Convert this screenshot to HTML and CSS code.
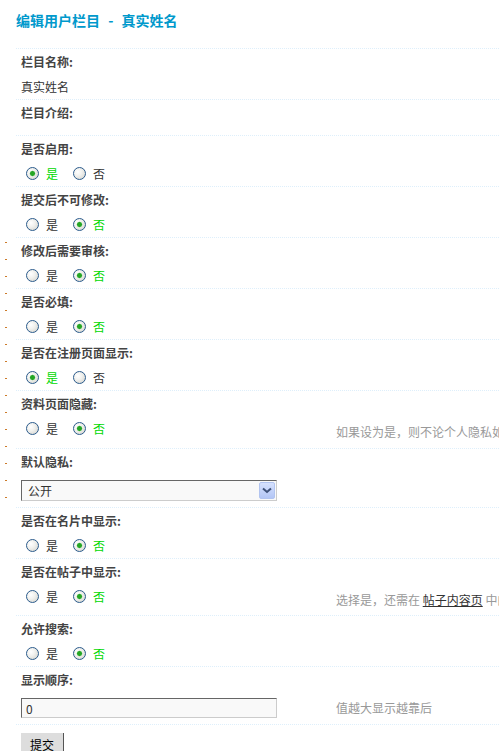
FILE: index.html
```html
<!DOCTYPE html>
<html lang="zh-CN">
<head>
    <meta charset="UTF-8">
    <title>编辑用户栏目</title>
    <link rel="stylesheet" href="styles.css">
</head>
<body>
    <div class="side-marks"></div>

    <h3 class="page-title">编辑用户栏目 - 真实姓名</h3>

    <form class="profile-form" id="profileForm">
        <div class="field">
            <div class="field-label">栏目名称:</div>
            <div class="field-value">
                <div class="cell">真实姓名</div>
            </div>
        </div>

        <div class="field">
            <div class="field-label">栏目介绍:</div>
            <div class="field-value empty"></div>
        </div>

        <div class="field">
            <div class="field-label">是否启用:</div>
            <div class="field-value">
                <div class="options">
                    <label class="opt checked"><input type="radio" name="available" checked>是</label>
                    <label class="opt"><input type="radio" name="available">否</label>
                </div>
            </div>
        </div>

        <div class="field">
            <div class="field-label">提交后不可修改:</div>
            <div class="field-value">
                <div class="options">
                    <label class="opt"><input type="radio" name="unchangeable">是</label>
                    <label class="opt checked"><input type="radio" name="unchangeable" checked>否</label>
                </div>
            </div>
        </div>

        <div class="field">
            <div class="field-label">修改后需要审核:</div>
            <div class="field-value">
                <div class="options">
                    <label class="opt"><input type="radio" name="needverify">是</label>
                    <label class="opt checked"><input type="radio" name="needverify" checked>否</label>
                </div>
            </div>
        </div>

        <div class="field">
            <div class="field-label">是否必填:</div>
            <div class="field-value">
                <div class="options">
                    <label class="opt"><input type="radio" name="required">是</label>
                    <label class="opt checked"><input type="radio" name="required" checked>否</label>
                </div>
            </div>
        </div>

        <div class="field">
            <div class="field-label">是否在注册页面显示:</div>
            <div class="field-value">
                <div class="options">
                    <label class="opt checked"><input type="radio" name="showinregister" checked>是</label>
                    <label class="opt"><input type="radio" name="showinregister">否</label>
                </div>
            </div>
        </div>

        <div class="field">
            <div class="field-label">资料页面隐藏:</div>
            <div class="field-value tall">
                <div class="options">
                    <label class="opt"><input type="radio" name="invisible">是</label>
                    <label class="opt checked"><input type="radio" name="invisible" checked>否</label>
                </div>
                <div class="tip">如果设为是，则不论个人隐私如何设置，此项都不会在个人资料页面显示</div>
            </div>
        </div>

        <div class="field">
            <div class="field-label">默认隐私:</div>
            <div class="field-value control">
                <div class="select-box">
                    <select name="privacy">
                        <option selected>公开</option>
                        <option>好友可见</option>
                        <option>保密</option>
                    </select>
                    <span class="select-arrow">
                        <svg width="10" height="7" viewBox="0 0 10 7"><path d="M1 1.5 L5 5 L9 1.5" fill="none" stroke="#3f527a" stroke-width="2"/></svg>
                    </span>
                </div>
            </div>
        </div>

        <div class="field">
            <div class="field-label">是否在名片中显示:</div>
            <div class="field-value">
                <div class="options">
                    <label class="opt"><input type="radio" name="showincard">是</label>
                    <label class="opt checked"><input type="radio" name="showincard" checked>否</label>
                </div>
            </div>
        </div>

        <div class="field">
            <div class="field-label">是否在帖子中显示:</div>
            <div class="field-value tall snug">
                <div class="options">
                    <label class="opt"><input type="radio" name="showinthread">是</label>
                    <label class="opt checked"><input type="radio" name="showinthread" checked>否</label>
                </div>
                <div class="tip">选择是，还需在 <a href="#">帖子内容页</a> 中的用户信息栏目中勾选此项</div>
            </div>
        </div>

        <div class="field">
            <div class="field-label">允许搜索:</div>
            <div class="field-value">
                <div class="options">
                    <label class="opt"><input type="radio" name="allowsearch">是</label>
                    <label class="opt checked"><input type="radio" name="allowsearch" checked>否</label>
                </div>
            </div>
        </div>

        <div class="field">
            <div class="field-label">显示顺序:</div>
            <div class="field-value control snug">
                <input type="text" class="text-input" name="displayorder" value="0">
                <div class="tip">值越大显示越靠后</div>
            </div>
        </div>

        <div class="field submit-row">
            <button type="submit" class="btn">提交</button>
        </div>
    </form>

    <script>
        // selected option text turns green
        document.querySelectorAll('.opt input').forEach(function (radio) {
            radio.addEventListener('change', function () {
                document.querySelectorAll('input[name="' + radio.name + '"]').forEach(function (r) {
                    r.parentNode.classList.toggle('checked', r.checked);
                });
            });
        });
    </script>
</body>
</html>
```

FILE: styles.css
```css
* {
    margin: 0;
    padding: 0;
    box-sizing: border-box;
}

body {
    font-family: "Noto Sans CJK SC", "Liberation Sans", sans-serif;
    font-size: 12px;
    color: #333;
    background-color: #fff;
    padding-left: 16px;
    position: relative;
}

/* little orange ticks down the left edge */
.side-marks {
    position: absolute;
    left: 5px;
    top: 242px;
    width: 2px;
    height: 272px;
    background: repeating-linear-gradient(to bottom, #cc7a29 0, #cc7a29 1px, transparent 1px, transparent 17px);
}

.page-title {
    font-size: 14px;
    font-weight: bold;
    color: #0099cc;
    line-height: 20px;
    word-spacing: 5px;
    padding-top: 10px;
    margin-bottom: 18px;
}

.profile-form {
    overflow: hidden;
}

.field {
    border-top: 1px dotted #deeffb;
}

.field-label {
    font-weight: bold;
    color: #444;
    line-height: 25px;
    padding-left: 5px;
}

.field-value {
    display: grid;
    grid-template-columns: 320px 1fr;
    height: 25px;
}

.field-value .cell {
    line-height: 25px;
    padding-left: 5px;
}

.field-value.empty {
    height: 10px;
}

.field-value.tall {
    height: 32px;
}

.field-value.control {
    height: 33px;
}

.field-value.tall.snug {
    height: 31px;
}

.field-value.control.snug {
    height: 32px;
}

/* radio groups */
.options {
    display: flex;
    align-items: center;
    height: 25px;
    padding-left: 10px;
}

.opt {
    display: inline-flex;
    align-items: center;
    gap: 7px;
    margin-right: 15px;
    cursor: pointer;
}

.opt.checked {
    color: #00d800;
}

.opt input {
    appearance: none;
    -webkit-appearance: none;
    width: 13px;
    height: 13px;
    border: 1px solid #2b5b8c;
    border-radius: 50%;
    background: radial-gradient(circle at 35% 35%, #fff 0, #f1f1ee 40%, #cfcfc9 100%);
    margin: 0;
}

.opt input:checked {
    background:
        radial-gradient(circle, #25a525 0, #25a525 2px, #8fd48f 2.6px, transparent 3.2px),
        radial-gradient(circle at 35% 35%, #fff 0, #f1f1ee 40%, #cfcfc9 100%);
}

.tip {
    align-self: center;
    color: #999;
    white-space: nowrap;
    line-height: 16px;
}

.tip a {
    color: #333;
    text-decoration: underline;
}

/* select and text input */
.select-box {
    position: relative;
    width: 256px;
    height: 21px;
    margin: 6px 0 0 5px;
}

.select-box select {
    appearance: none;
    -webkit-appearance: none;
    width: 100%;
    height: 100%;
    border: 1px solid;
    border-color: #666 #ccc #ccc #666;
    background-color: #f9f9f9;
    font: inherit;
    color: #333;
    padding-left: 6px;
    outline: none;
}

.select-arrow {
    position: absolute;
    right: 2px;
    top: 2px;
    width: 16px;
    height: 17px;
    display: flex;
    align-items: center;
    justify-content: center;
    background: linear-gradient(#d6e1fd, #b3c6f6);
    border: 1px solid #b2c4f0;
    border-radius: 2px;
    pointer-events: none;
}

.text-input {
    align-self: start;
    width: 256px;
    height: 20px;
    margin: 6px 0 0 5px;
    border: 1px solid;
    border-color: #666 #ccc #ccc #666;
    background-color: #f9f9f9;
    font: inherit;
    color: #333;
    padding-left: 4px;
    outline: none;
}

/* submit */
.submit-row {
    padding-top: 8px;
    padding-left: 5px;
}

.btn {
    height: 22px;
    padding: 0 9px;
    background-color: #ddd;
    border: none;
    border-right: 1px solid #555;
    font: inherit;
    color: #000;
    cursor: pointer;
}
```
